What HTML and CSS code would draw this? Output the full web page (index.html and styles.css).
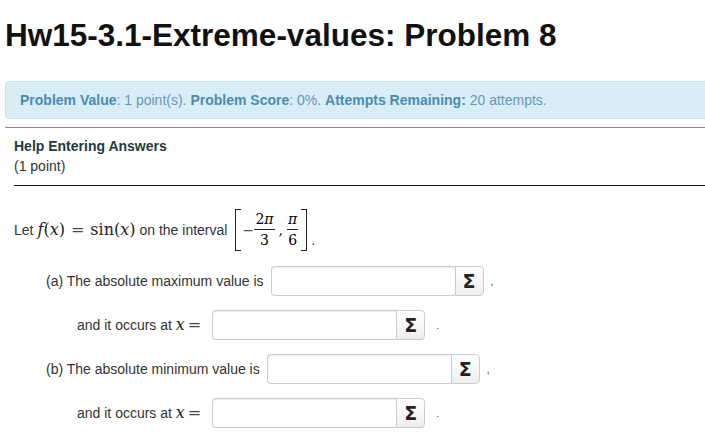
FILE: index.html
```html
<!DOCTYPE html>
<html lang="en">
<head>
    <meta charset="UTF-8">
    <meta name="viewport" content="width=device-width, initial-scale=1.0">
    <title>Hw15-3.1-Extreme-values: Problem 8</title>
    <link rel="stylesheet" href="styles.css">
</head>
<body>
    <h1>Hw15-3.1-Extreme-values: Problem 8</h1>

    <div class="info-box">
        <b>Problem Value</b>: 1 point(s). <b>Problem Score</b>: 0%. <b>Attempts Remaining:</b> 20 attempts.
    </div>

    <div class="problem">
        <div class="problem-head">
            <div class="help-link">Help Entering Answers</div>
            <div class="points">(1 point)</div>
        </div>

        <div class="statement">
            <span>Let</span>
            <span class="math"><i>f</i>(<i>x</i>)<span class="eq">=</span>sin(<i>x</i>)</span>
            <span>on the interval</span>
            <span class="math interval">
                <span class="bracket bracket-left"></span>
                <span class="minus">&minus;</span>
                <span class="frac"><span class="num">2<i>π</i></span><span class="den">3</span></span>
                <span class="comma">,</span>
                <span class="frac"><span class="num"><i>π</i></span><span class="den">6</span></span>
                <span class="bracket bracket-right"></span>
            </span>
            <span class="stop">.</span>
        </div>

        <div class="answer-row part">
            <span>(a) The absolute maximum value is</span>
            <span class="answer-group"><input type="text"><button><span class="sigma">Σ</span></button></span>
            <span class="mark">,</span>
        </div>
        <div class="answer-row sub">
            <span>and it occurs at <span class="math"><i>x</i><span class="eq">=</span></span></span>
            <span class="answer-group"><input type="text"><button><span class="sigma">Σ</span></button></span>
            <span class="mark">.</span>
        </div>
        <div class="answer-row part">
            <span>(b) The absolute minimum value is</span>
            <span class="answer-group"><input type="text"><button><span class="sigma">Σ</span></button></span>
            <span class="mark">,</span>
        </div>
        <div class="answer-row sub">
            <span>and it occurs at <span class="math"><i>x</i><span class="eq">=</span></span></span>
            <span class="answer-group"><input type="text"><button><span class="sigma">Σ</span></button></span>
            <span class="mark">.</span>
        </div>
    </div>
</body>
</html>
```

FILE: styles.css
```css
html, body {
    overflow: hidden;
}
body {
    font-family: "Liberation Sans", Arial, sans-serif;
    font-size: 14px;
    color: #333;
    margin: 0;
    padding: 0 0 0 5px;
    background-color: #fff;
}
h1 {
    font-size: 31.5px;
    line-height: 36px;
    font-weight: bold;
    color: #111;
    margin: 0;
    padding-top: 17px;
}
.info-box {
    height: 38px;
    line-height: 37px;
    margin-top: 28px;
    margin-right: -6px;
    padding-left: 14px;
    box-sizing: border-box;
    background-color: #d9edf7;
    border: 1px solid #bce8f1;
    border-radius: 4px;
    color: #6a96b4;
    font-size: 14px;
}
.info-box b {
    color: #4a8cb0;
}
.problem {
    margin-top: 8px;
    border-top: 1px solid #888;
    padding-left: 9px;
}
.problem-head {
    border-bottom: 1px solid #111;
    padding-top: 8px;
    height: 49px;
}
.help-link {
    font-weight: bold;
    line-height: 20px;
    color: #1d3c3c;
}
.points {
    line-height: 20px;
}
.statement {
    display: flex;
    align-items: center;
    gap: 4px;
    height: 50px;
    margin-top: 19px;
    margin-bottom: 11px;
}
.math {
    font-family: "DejaVu Serif", "Liberation Serif", serif;
    font-size: 16px;
    line-height: 14px;
    color: #222;
}
.eq {
    padding: 0 6px;
    color: #444;
}
.sub .eq {
    padding: 0 0 0 3px;
}
.interval {
    display: inline-flex;
    align-items: center;
    margin-left: 4px;
}
.bracket {
    width: 5px;
    height: 40px;
    border: 1px solid #222;
}
.bracket-left {
    border-right: none;
    margin-right: 1px;
}
.bracket-right {
    border-left: none;
    margin-left: 3px;
}
.minus {
    width: 12px;
    font-size: 14px;
    color: #555;
}
.frac {
    display: inline-flex;
    flex-direction: column;
    align-items: center;
    font-size: 14px;
    line-height: 17px;
    color: #000;
}
.num {
    padding: 0 1px 1px;
    border-bottom: 1px solid #222;
}
.den {
    padding-top: 2px;
}
.comma {
    margin: 0 4px;
    font-size: 14px;
}
.stop {
    align-self: flex-end;
    line-height: 30px;
}
.answer-row {
    display: flex;
    align-items: center;
    gap: 8px;
    height: 30px;
    margin-bottom: 14px;
}
.part {
    padding-left: 32px;
    gap: 7px;
}
.sub {
    padding-left: 63px;
    gap: 11px;
}
.answer-group {
    display: inline-flex;
    height: 30px;
}
.answer-group input {
    width: 184px;
    height: 30px;
    box-sizing: border-box;
    padding: 0;
    border: 1px solid #ccc;
    border-right: none;
    border-radius: 4px 0 0 4px;
    box-shadow: inset 0 1px 1px rgba(0, 0, 0, 0.075);
    background-color: #fff;
}
.answer-group button {
    width: 29px;
    height: 30px;
    padding: 0;
    border: 1px solid #ccc;
    border-radius: 0 4px 4px 0;
    background-color: #f5f5f5;
    background-image: linear-gradient(#fff, #eee);
    cursor: pointer;
}
.sigma {
    font-family: "DejaVu Sans", Arial, sans-serif;
    font-weight: bold;
    font-size: 19px;
    line-height: 20px;
    color: #222;
}
.mark {
    font-size: 10px;
}
```
